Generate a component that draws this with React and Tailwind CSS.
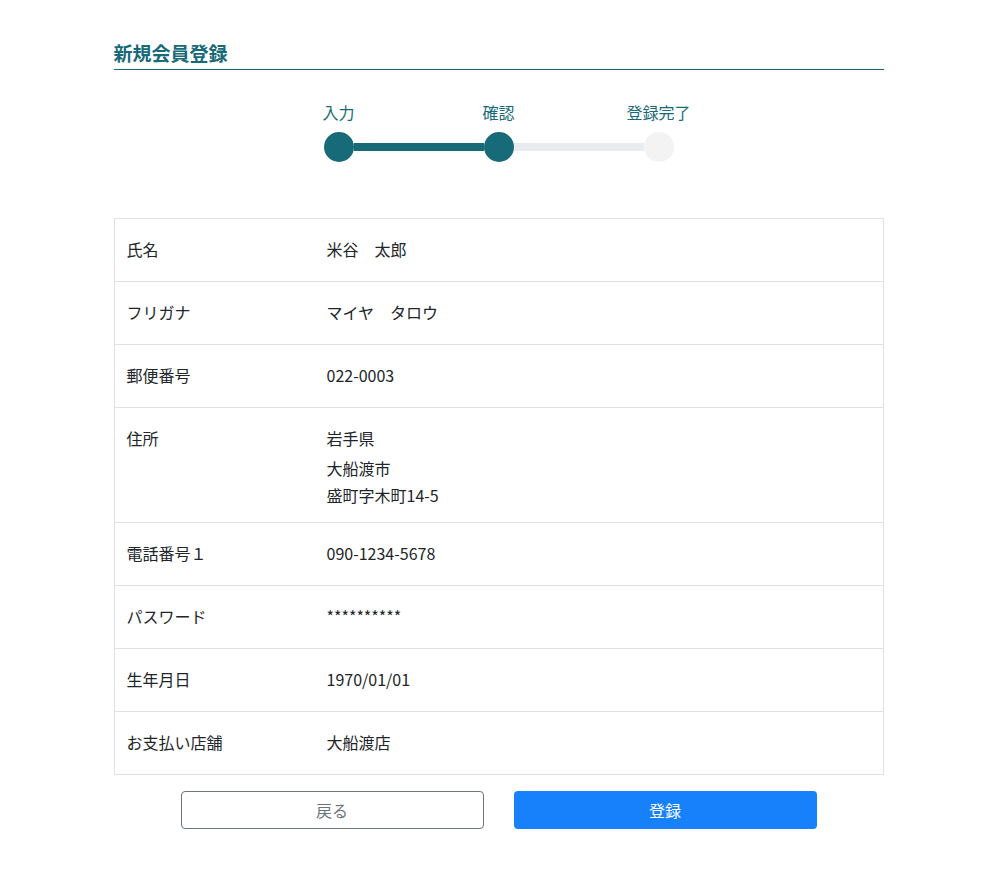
const rows = [
  { label: "氏名", value: "米谷　太郎" },
  { label: "フリガナ", value: "マイヤ　タロウ" },
  { label: "郵便番号", value: "022-0003" },
  { label: "住所", address: ["岩手県", "大船渡市", "盛町字木町14-5"] },
  { label: "電話番号１", value: "090-1234-5678" },
  { label: "パスワード", value: "**********" },
  { label: "生年月日", value: "1970/01/01" },
  { label: "お支払い店舗", value: "大船渡店" },
];

const steps = [
  { label: "入力", done: true },
  { label: "確認", done: true },
  { label: "登録完了", done: false },
];

const Step = ({ label, done }) => (
  <div className="flex flex-col items-center w-[30px]">
    <span className="whitespace-nowrap text-[16px] leading-[24px] text-[#176a77] mb-[8px]">{label}</span>
    <div className={done ? "w-[30px] h-[30px] rounded-full bg-[#176a77]" : "w-[30px] h-[30px] rounded-full bg-[#f3f3f3]"} />
  </div>
);

export default function App() {
  return (
    <div className="min-h-screen bg-white pl-px text-[#212529] font-['Noto_Sans_CJK_JP','Noto_Sans',sans-serif]">
      <div className="w-[770px] mx-auto pt-[41px] pb-[60px]">
        <h2 className="text-[19px] leading-[24px] font-bold text-[#176a77] pb-[4px] border-b border-[#176a77]">
          新規会員登録
        </h2>

        {/* stepper */}
        <div className="flex items-end w-[350px] mx-auto mt-[30px]">
          <Step {...steps[0]} />
          <div className="flex-1 h-2 mb-[11px] bg-[#176a77]" />
          <Step {...steps[1]} />
          <div className="flex-1 h-2 mb-[11px] bg-[#e9ecef]" />
          <Step {...steps[2]} />
        </div>

        <div className="mt-[56px] border border-[#dee2e6] text-[16px]">
          {rows.map((row, i) => (
            <div key={row.label} className={i === 0 ? "flex" : "flex border-t border-[#dee2e6]"}>
              <div className="w-[200px] px-3 pt-[18px] pb-[20px] leading-[24px]">{row.label}</div>
              {row.address ? (
                <div className="flex-1 px-3 pt-[18px] pb-[13px]">
                  <div className="leading-[24px] mb-[5px]">{row.address[0]}</div>
                  <div className="leading-[27px]">{row.address[1]}</div>
                  <div className="leading-[27px]">{row.address[2]}</div>
                </div>
              ) : (
                <div className="flex-1 px-3 pt-[18px] pb-[20px] leading-[24px]">{row.value}</div>
              )}
            </div>
          ))}
        </div>

        <div className="flex justify-center gap-[30px] mt-4">
          <button className="w-[303px] h-[38px] border border-[#6c757d] rounded-[4px] text-[#6c757d] text-[16px] bg-white">
            戻る
          </button>
          <button className="w-[303px] h-[38px] rounded-[4px] bg-[#1781fb] text-white text-[16px]">
            登録
          </button>
        </div>
      </div>
    </div>
  );
}
